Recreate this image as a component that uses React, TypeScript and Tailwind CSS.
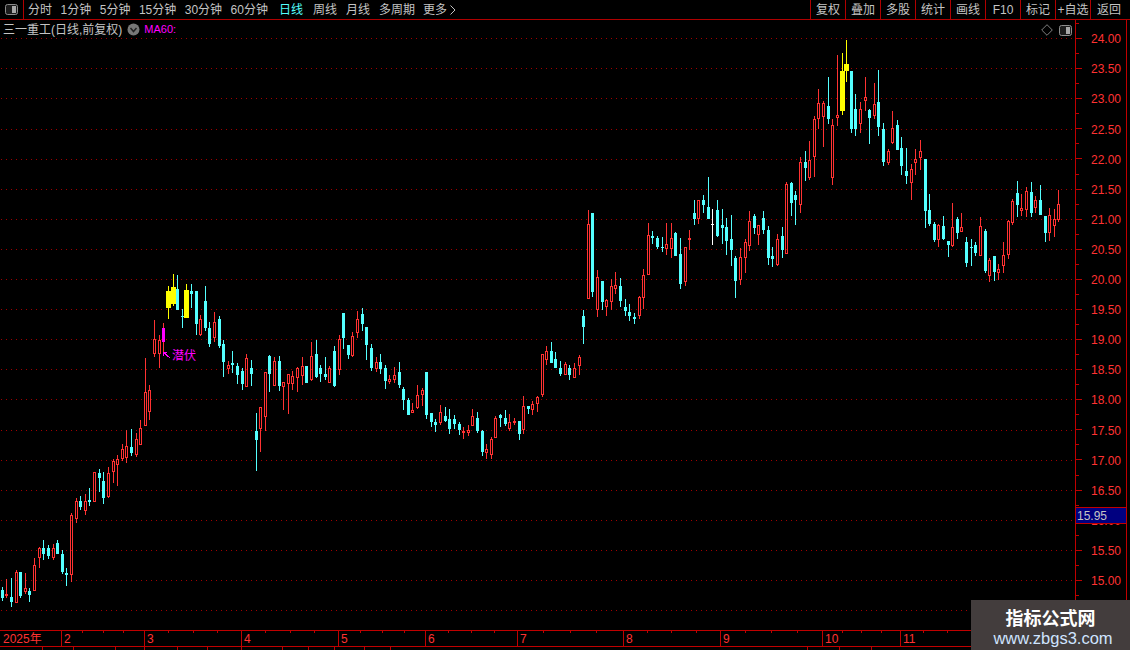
import React from 'react';

type Kind = 'r' | 'c' | 'y' | 'm' | 'w';
type Candle = [number, number, number, number, number, Kind];

// x, high, body top, body bottom, low (page pixels)
const candles: Candle[] = [
  [2, 587, 590, 598, 601, 'c'], [6, 579, 594, 596, 598, 'r'], [11, 578, 597, 602, 607, 'c'], [16, 570, 572, 603, 603, 'r'],
  [20, 572, 572, 596, 598, 'c'], [25, 573, 588, 592, 594, 'r'], [29, 588, 591, 595, 602, 'c'], [34, 558, 565, 591, 591, 'r'],
  [39, 547, 548, 558, 568, 'r'], [43, 540, 548, 554, 560, 'c'], [48, 545, 548, 556, 559, 'c'], [53, 544, 548, 558, 560, 'r'],
  [57, 540, 543, 554, 554, 'c'], [62, 550, 554, 572, 574, 'c'], [66, 568, 573, 575, 586, 'c'], [71, 513, 515, 575, 582, 'r'],
  [76, 498, 501, 519, 523, 'r'], [80, 496, 501, 507, 510, 'c'], [85, 494, 501, 511, 515, 'r'], [89, 488, 500, 502, 506, 'c'],
  [94, 472, 472, 502, 502, 'r'], [99, 469, 473, 478, 492, 'c'], [103, 472, 481, 498, 504, 'c'], [108, 467, 473, 497, 498, 'r'],
  [113, 459, 461, 472, 483, 'r'], [117, 455, 459, 465, 486, 'r'], [122, 444, 449, 459, 461, 'r'], [126, 430, 446, 458, 463, 'r'],
  [131, 429, 447, 453, 456, 'c'], [136, 433, 439, 455, 457, 'r'], [140, 420, 428, 445, 445, 'r'], [145, 358, 392, 426, 426, 'r'],
  [149, 385, 390, 412, 420, 'r'], [154, 320, 339, 354, 357, 'r'], [159, 335, 340, 354, 368, 'r'], [163, 323, 328, 342, 354, 'm'],
  [168, 286, 291, 308, 319, 'y'], [173, 274, 287, 304, 306, 'y'], [177, 275, 289, 310, 310, 'c'], [182, 309, 316, 317, 328, 'c'],
  [186, 284, 290, 318, 318, 'y'], [191, 284, 291, 294, 308, 'c'], [196, 291, 291, 324, 335, 'c'], [200, 315, 319, 335, 336, 'r'],
  [205, 286, 301, 328, 331, 'c'], [209, 322, 328, 344, 347, 'c'], [214, 312, 322, 338, 342, 'r'], [219, 316, 319, 346, 348, 'c'],
  [223, 340, 344, 362, 377, 'c'], [228, 361, 365, 369, 374, 'r'], [232, 351, 363, 365, 373, 'c'], [237, 363, 366, 375, 384, 'c'],
  [242, 368, 371, 384, 390, 'c'], [246, 354, 358, 387, 387, 'r'], [251, 360, 368, 374, 386, 'c'], [256, 413, 431, 440, 471, 'c'],
  [260, 407, 407, 429, 452, 'r'], [265, 372, 372, 417, 431, 'r'], [269, 355, 356, 374, 392, 'c'], [274, 357, 361, 386, 386, 'r'],
  [279, 356, 361, 386, 391, 'c'], [283, 382, 382, 387, 410, 'r'], [288, 374, 374, 384, 414, 'r'], [292, 371, 376, 384, 390, 'r'],
  [297, 367, 368, 378, 392, 'r'], [302, 357, 366, 376, 385, 'r'], [306, 366, 366, 383, 383, 'c'], [311, 342, 356, 380, 381, 'r'],
  [316, 340, 354, 377, 378, 'c'], [320, 365, 368, 374, 382, 'c'], [325, 357, 374, 377, 380, 'c'], [329, 366, 368, 383, 383, 'r'],
  [334, 346, 351, 386, 387, 'c'], [339, 335, 339, 370, 375, 'r'], [343, 313, 313, 338, 349, 'c'], [348, 345, 345, 355, 359, 'c'],
  [352, 332, 336, 356, 357, 'r'], [357, 311, 319, 333, 338, 'r'], [362, 308, 314, 324, 331, 'c'], [366, 327, 327, 345, 360, 'c'],
  [371, 344, 348, 368, 371, 'c'], [376, 357, 362, 369, 372, 'r'], [380, 354, 362, 369, 374, 'c'], [385, 365, 368, 381, 389, 'c'],
  [389, 375, 379, 382, 384, 'r'], [394, 367, 375, 380, 383, 'r'], [399, 362, 372, 385, 388, 'c'], [403, 387, 389, 400, 410, 'c'],
  [408, 398, 400, 415, 415, 'c'], [412, 403, 410, 413, 413, 'r'], [417, 385, 395, 408, 409, 'r'], [422, 388, 390, 395, 406, 'r'],
  [426, 372, 372, 415, 419, 'c'], [431, 413, 413, 422, 427, 'c'], [435, 419, 422, 425, 432, 'c'], [440, 405, 412, 423, 425, 'r'],
  [445, 407, 416, 421, 422, 'c'], [449, 409, 419, 429, 434, 'c'], [454, 415, 419, 424, 429, 'c'], [459, 422, 424, 430, 435, 'c'],
  [463, 427, 431, 433, 439, 'r'], [468, 425, 430, 433, 436, 'r'], [472, 409, 416, 426, 426, 'r'], [477, 412, 418, 431, 433, 'c'],
  [482, 430, 431, 452, 456, 'c'], [486, 444, 449, 453, 459, 'r'], [491, 437, 439, 455, 459, 'r'], [495, 416, 418, 438, 438, 'r'],
  [500, 414, 415, 418, 427, 'c'], [505, 410, 418, 424, 426, 'c'], [509, 414, 422, 429, 431, 'r'], [514, 418, 421, 423, 425, 'r'],
  [519, 421, 421, 434, 440, 'c'], [523, 396, 406, 430, 434, 'r'], [528, 406, 406, 409, 414, 'c'], [532, 401, 404, 410, 415, 'r'],
  [537, 396, 397, 404, 412, 'r'], [542, 354, 354, 395, 397, 'r'], [546, 346, 351, 360, 365, 'r'], [551, 342, 351, 363, 363, 'c'],
  [555, 352, 359, 368, 368, 'c'], [560, 361, 368, 374, 376, 'c'], [565, 362, 364, 375, 375, 'r'], [569, 365, 368, 375, 380, 'c'],
  [574, 363, 368, 378, 378, 'r'], [579, 355, 357, 366, 375, 'r'], [583, 310, 316, 327, 344, 'c'], [588, 210, 224, 299, 299, 'r'],
  [592, 213, 213, 292, 297, 'c'], [597, 270, 277, 310, 317, 'r'], [602, 281, 281, 302, 310, 'c'], [606, 299, 300, 307, 316, 'r'],
  [611, 279, 286, 302, 310, 'r'], [615, 272, 285, 289, 294, 'r'], [620, 278, 286, 301, 307, 'c'], [625, 299, 307, 311, 316, 'c'],
  [629, 304, 312, 316, 321, 'c'], [634, 313, 317, 319, 324, 'c'], [639, 296, 297, 316, 319, 'r'], [643, 269, 275, 298, 309, 'r'],
  [648, 223, 235, 275, 275, 'r'], [652, 231, 236, 238, 244, 'c'], [657, 236, 238, 247, 249, 'c'], [662, 237, 247, 248, 252, 'c'],
  [666, 223, 244, 249, 255, 'r'], [671, 223, 238, 249, 258, 'r'], [675, 232, 233, 256, 256, 'c'], [680, 238, 254, 284, 289, 'c'],
  [685, 247, 247, 282, 286, 'r'], [689, 230, 238, 239, 250, 'r'], [694, 200, 213, 219, 225, 'c'], [698, 200, 200, 219, 224, 'r'],
  [703, 195, 200, 205, 213, 'c'], [708, 177, 207, 219, 219, 'c'], [712, 209, 224, 225, 245, 'w'], [717, 200, 210, 236, 237, 'c'],
  [722, 209, 225, 228, 244, 'c'], [726, 218, 227, 241, 255, 'c'], [731, 215, 239, 250, 266, 'c'], [735, 256, 258, 281, 298, 'c'],
  [740, 248, 257, 280, 285, 'r'], [745, 239, 242, 258, 273, 'r'], [749, 211, 221, 246, 251, 'r'], [754, 214, 216, 228, 234, 'c'],
  [758, 225, 225, 235, 245, 'r'], [763, 211, 218, 230, 234, 'c'], [768, 226, 230, 258, 265, 'c'], [772, 247, 256, 259, 267, 'c'],
  [777, 234, 239, 265, 266, 'r'], [782, 227, 236, 250, 258, 'c'], [786, 182, 184, 254, 254, 'r'], [791, 182, 183, 203, 216, 'c'],
  [795, 191, 195, 200, 225, 'c'], [800, 157, 162, 205, 213, 'r'], [805, 151, 162, 168, 181, 'c'], [809, 141, 160, 178, 180, 'r'],
  [814, 116, 119, 157, 177, 'r'], [818, 89, 103, 119, 129, 'r'], [823, 101, 103, 117, 147, 'r'], [828, 77, 106, 119, 124, 'c'],
  [832, 119, 125, 178, 185, 'r'], [837, 55, 115, 118, 126, 'r'], [842, 53, 71, 111, 115, 'y'], [846, 40, 64, 71, 82, 'y'],
  [851, 71, 71, 129, 133, 'c'], [855, 94, 109, 129, 136, 'c'], [860, 102, 109, 124, 133, 'r'], [865, 77, 97, 101, 111, 'r'],
  [869, 109, 110, 118, 144, 'c'], [874, 83, 104, 116, 119, 'r'], [878, 70, 102, 127, 136, 'c'], [883, 123, 129, 162, 166, 'c'],
  [888, 149, 151, 163, 165, 'r'], [892, 111, 128, 143, 144, 'r'], [897, 120, 125, 150, 150, 'c'], [901, 137, 148, 166, 175, 'c'],
  [906, 148, 171, 176, 184, 'c'], [911, 164, 169, 183, 200, 'r'], [915, 149, 159, 163, 175, 'r'], [920, 140, 151, 158, 170, 'r'],
  [925, 159, 159, 211, 228, 'c'], [929, 194, 210, 224, 226, 'c'], [934, 222, 224, 240, 242, 'c'], [938, 224, 225, 240, 247, 'r'],
  [943, 216, 226, 239, 240, 'c'], [948, 241, 241, 245, 257, 'c'], [952, 203, 227, 246, 247, 'r'], [957, 217, 219, 233, 239, 'c'],
  [961, 213, 227, 232, 232, 'r'], [966, 237, 242, 263, 267, 'c'], [971, 239, 247, 248, 266, 'c'], [975, 242, 245, 253, 256, 'c'],
  [980, 217, 226, 256, 256, 'r'], [985, 229, 231, 271, 273, 'c'], [989, 258, 260, 276, 282, 'r'], [994, 256, 256, 272, 281, 'c'],
  [998, 264, 269, 273, 280, 'r'], [1003, 242, 255, 266, 273, 'r'], [1008, 220, 221, 255, 259, 'r'], [1012, 199, 201, 223, 225, 'r'],
  [1017, 181, 193, 205, 217, 'c'], [1021, 194, 208, 211, 216, 'r'], [1026, 187, 191, 210, 217, 'r'], [1031, 182, 192, 213, 217, 'c'],
  [1035, 196, 200, 208, 213, 'r'], [1040, 185, 200, 215, 215, 'c'], [1045, 216, 216, 233, 242, 'c'], [1049, 208, 215, 233, 241, 'r'],
  [1054, 209, 219, 226, 237, 'r'], [1058, 190, 204, 220, 222, 'r'],
];

const RED = '#ff3232';
const CYAN = '#54ffff';

const leftTabs = ['分时', '1分钟', '5分钟', '15分钟', '30分钟', '60分钟'];
const periodTabs = ['周线', '月线', '多周期'];
const rightButtons = ['复权', '叠加', '多股', '统计', '画线', 'F10', '标记', '+自选'];

const gridLines = Array.from({ length: 20 }, (_, i) => Math.round(38.2 + i * 30.1));
const priceLabels = ['24.00', '23.50', '23.00', '22.50', '22.00', '21.50', '21.00', '20.50', '20.00', '19.50', '19.00', '18.50', '18.00', '17.50', '17.00', '16.50', '16.00', '15.50', '15.00'];
const axisTicks = Array.from({ length: 39 }, (_, i) => Math.round(23 + i * 15.05));

const months = [
  { label: '2025年', width: 61 }, { label: '2', width: 83 }, { label: '3', width: 97 }, { label: '4', width: 97 },
  { label: '5', width: 87 }, { label: '6', width: 92 }, { label: '7', width: 106 }, { label: '8', width: 97 },
  { label: '9', width: 102 }, { label: '10', width: 78 }, { label: '11', width: 230 },
];
const minorTicks = [82, 103, 123, 168, 193, 217, 265, 290, 314, 360, 382, 404, 448, 471, 494, 543, 570, 596, 647, 671, 696, 745, 771, 797, 842, 861, 881, 923, 947];
const bottomTicks = [42, 73, 115, 144, 177, 207, 241, 282, 308, 334, 364, 390, 807, 839, 871];

const SplitIcon = () => (
  <svg width="13" height="11" viewBox="0 0 13 11">
    <rect x="0.5" y="0.5" width="12" height="10" rx="2" fill="#1c1c1c" stroke="#8c8c8c" />
    <rect x="7" y="2" width="4" height="7" fill="#a8a8a8" />
  </svg>
);

const CandleMark = ({ c }: { c: Candle }) => {
  const [x, hi, top, bot, lo, kind] = c;
  const cx = x + 0.5;
  const color = kind === 'r' ? RED : kind === 'c' ? CYAN : kind === 'y' ? '#ffff00' : kind === 'w' ? '#ffffff' : '#ff00ff';
  const wick = kind === 'm' ? RED : color;
  const half = kind === 'y' ? 2 : 1;
  return (
    <g>
      <line x1={cx} x2={cx} y1={hi} y2={top} stroke={wick} />
      <line x1={cx} x2={cx} y1={bot} y2={lo} stroke={wick} />
      {kind === 'r' ? (
        <rect x={x - 0.5} y={top + 0.5} width={2} height={Math.max(bot - top - 1, 1)} fill="none" stroke={RED} />
      ) : (
        <rect x={x - half} y={top} width={half * 2 + 1} height={Math.max(bot - top, 1)} fill={color} />
      )}
    </g>
  );
};

const App = () => {
  return (
    <div className="w-[1130px] h-[650px] bg-black overflow-hidden flex flex-col relative font-['Liberation_Sans','Noto_Sans_CJK_SC',sans-serif] text-[12px] leading-none">
      {/* Top toolbar */}
      <div className="h-[20px] shrink-0 flex items-stretch border-b border-[#b00000] text-[#c4c4c4]">
        <div className="w-[24px] flex items-center justify-center border-r border-[#b00000]">
          <SplitIcon />
        </div>
        <div className="flex items-center gap-[8.5px] pl-[4px]">
          {leftTabs.map((tab) => (
            <span key={tab}>{tab}</span>
          ))}
        </div>
        <div className="flex items-center gap-[9px] pl-[11px]">
          <span className="text-[#54ffff] mr-[1px]">日线</span>
          {periodTabs.map((tab) => (
            <span key={tab}>{tab}</span>
          ))}
          <span className="flex items-center gap-[3px] ml-[-1px]">
            更多
            <svg width="6" height="10" viewBox="0 0 6 10">
              <path d="M0.5 0.5 L5 5 L0.5 9.5" fill="none" stroke="#c4c4c4" />
            </svg>
          </span>
        </div>
        <div className="ml-auto flex items-stretch">
          {rightButtons.map((label) => (
            <div key={label} className="w-[35px] flex items-center justify-center border-l border-[#b00000] whitespace-nowrap">
              {label}
            </div>
          ))}
          <div className="w-[40px] flex items-center pl-[6px] border-l border-[#b00000]">返回</div>
        </div>
      </div>

      {/* Chart and price axis */}
      <div className="h-[610px] shrink-0 flex relative">
        <div className="absolute left-[3px] top-[3px] flex items-center text-[#c4c4c4]">
          <span>三一重工(日线,前复权)</span>
          <svg className="ml-[5px]" width="13" height="13" viewBox="0 0 13 13">
            <circle cx="6.5" cy="6.5" r="6" fill="#777777" />
            <path d="M3.5 5 L6.5 8.5 L9.5 5" fill="none" stroke="#222222" strokeWidth="1.5" />
          </svg>
          <span className="ml-[4px] text-[#ff00ff] text-[11px]">MA60:</span>
        </div>
        <div className="absolute left-[1041px] top-[4px] flex items-center gap-[6px]">
          <svg width="12" height="12" viewBox="0 0 12 12">
            <path d="M6 0.7 L11.3 6 L6 11.3 L0.7 6 Z" fill="none" stroke="#808080" />
          </svg>
          <SplitIcon />
        </div>

        <svg className="w-[1075px] h-[610px] shrink-0" viewBox="0 20 1075 610" shapeRendering="crispEdges">
          {gridLines.map((y) => (
            <line key={y} x1="1" x2="1075" y1={y + 0.5} y2={y + 0.5} stroke="#a00000" strokeDasharray="1 4" />
          ))}
          {candles.map((c) => (
            <CandleMark key={c[0]} c={c} />
          ))}
          <g fill="none" stroke="#ff00ff">
            <path d="M170 358 L163 352 M163 352 L163 356 M163 352 L167 352" />
          </g>
          <text x="172" y="360" fill="#ff00ff" fontSize="12" fontFamily="'Noto Sans CJK SC', sans-serif">潜伏</text>
        </svg>

        <div className="w-[52px] shrink-0 border-l border-r border-[#c00000] relative">
          <svg className="w-[50px] h-[610px]" viewBox="0 20 50 610">
            {axisTicks.map((y, i) => (
              <line key={y} x1="0" x2={i % 2 === 1 ? 6 : 3} y1={y + 0.5} y2={y + 0.5} stroke="#c00000" shapeRendering="crispEdges" />
            ))}
            {priceLabels.map((p, i) => (
              <text key={p} x="15" y={gridLines[i] + 5} fill={RED} fontSize="12" fontFamily="'Liberation Sans', sans-serif">{p}</text>
            ))}
          </svg>
          <div className="absolute left-0 right-0 top-[487px] h-[17px] bg-[#000080] border-y border-[#c00000] text-[#c4c4c4] flex items-center pl-[1px]">
            15.95
          </div>
        </div>
      </div>

      {/* Time axis */}
      <div className="h-[17px] shrink-0 flex border-y border-[#c00000] text-[#ff3232] relative">
        {months.map((m, i) => (
          <div
            key={m.label}
            className={i === 0 ? 'flex items-center pl-[3px]' : 'flex items-center pl-[2px] border-l border-[#c00000]'}
            style={{ width: m.width }}
          >
            {m.label}
          </div>
        ))}
        <svg className="absolute left-0 top-0 w-[1130px] h-[2px]" viewBox="0 0 1130 2" shapeRendering="crispEdges">
          {minorTicks.map((x) => (
            <line key={x} x1={x + 0.5} x2={x + 0.5} y1="0" y2="2" stroke="#c00000" />
          ))}
        </svg>
      </div>
      <svg className="w-[1130px] h-[3px] shrink-0" viewBox="0 0 1130 3" shapeRendering="crispEdges">
        {bottomTicks.map((x) => (
          <line key={x} x1={x + 0.5} x2={x + 0.5} y1="0" y2="3" stroke="#c00000" />
        ))}
      </svg>

      {/* Watermark */}
      <div className="absolute left-[971px] top-[600px] w-[159px] h-[50px] bg-[#433d3d] flex flex-col items-center pt-[6px]">
        <span className="text-white text-[18px] font-bold leading-[22px] font-['Noto_Sans_CJK_SC',sans-serif]">指标公式网</span>
        <span className="text-[#cfe4ff] text-[16.5px] leading-[18px] mt-[1px] ml-[5px]">www.zbgs3.com</span>
      </div>
    </div>
  );
};

export default App;
